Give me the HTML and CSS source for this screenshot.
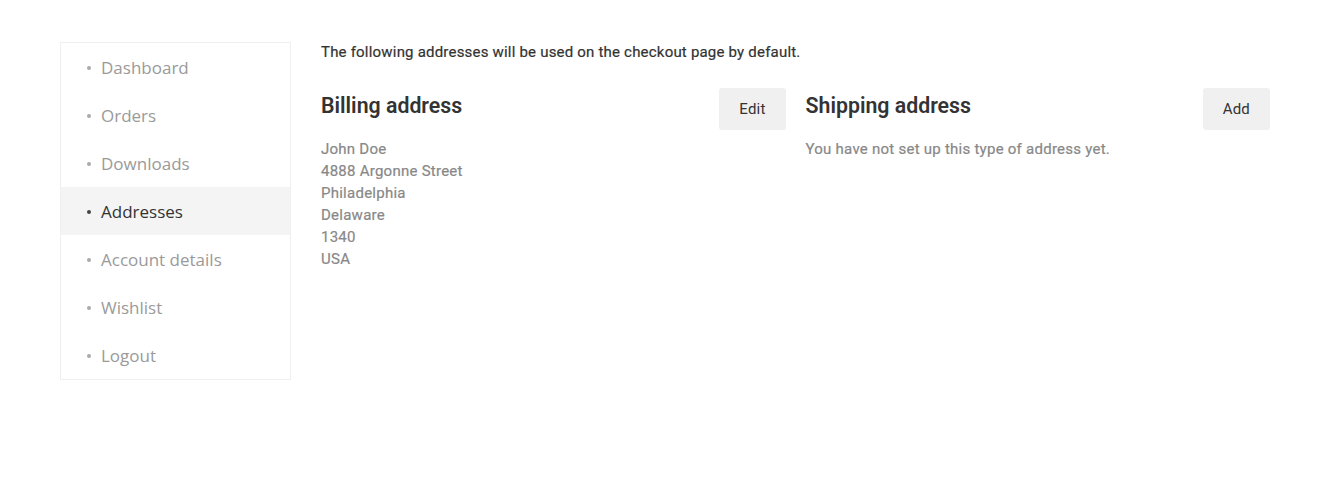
FILE: index.html
```html
<!DOCTYPE html>
<html>
<head>
<meta charset="utf-8">
<link rel="stylesheet" href="styles.css">
</head>
<body>
<div class="page">
  <nav class="sidebar">
    <ul class="nav-list">
      <li class="nav-item"><span class="dot"></span>Dashboard</li>
      <li class="nav-item"><span class="dot"></span>Orders</li>
      <li class="nav-item"><span class="dot"></span>Downloads</li>
      <li class="nav-item active"><span class="dot"></span>Addresses</li>
      <li class="nav-item"><span class="dot"></span>Account details</li>
      <li class="nav-item"><span class="dot"></span>Wishlist</li>
      <li class="nav-item"><span class="dot"></span>Logout</li>
    </ul>
  </nav>
  <main class="content">
    <p class="intro">The following addresses will be used on the checkout page by default.</p>
    <div class="columns">
      <section class="address">
        <div class="address-head">
          <h3 class="address-title">Billing address</h3>
          <button class="btn">Edit</button>
        </div>
        <address class="address-body">John Doe<br>4888 Argonne Street<br>Philadelphia<br>Delaware<br>1340<br>USA</address>
      </section>
      <section class="address">
        <div class="address-head">
          <h3 class="address-title">Shipping address</h3>
          <button class="btn">Add</button>
        </div>
        <p class="address-body">You have not set up this type of address yet.</p>
      </section>
    </div>
  </main>
</div>
</body>
</html>
```
FILE: styles.css
```css
html, body {
  margin: 0;
  padding: 0;
  background: #fff;
}
.page {
  display: flex;
  align-items: flex-start;
  gap: 30px;
  padding: 42px 47px 0 60px;
}
.sidebar {
  width: 229px;
  flex: none;
  border: 1px solid #efefef;
}
.nav-list {
  list-style: none;
  margin: 0;
  padding: 0;
}
.nav-item {
  display: flex;
  align-items: center;
  height: 48px;
  padding-left: 26px;
  font-family: "Open Sans", sans-serif;
  font-size: 17px;
  color: #9a9a9a;
}
.nav-item .dot {
  width: 4px;
  height: 4px;
  border-radius: 50%;
  background: #aaa;
  margin-right: 10px;
  margin-top: 1px;
}
.nav-item.active {
  background: #f4f4f4;
  color: #333;
}
.nav-item.active .dot {
  background: #444;
}
.content {
  flex: 1;
  font-family: "Roboto", sans-serif;
}
.intro {
  margin: -1px 0 0;
  font-size: 15px;
  line-height: 22px;
  font-weight: 400;
  letter-spacing: 0.2px;
  color: #333;
  -webkit-text-stroke: 0.2px #333;
}
.columns {
  display: grid;
  grid-template-columns: 1fr 1fr;
  gap: 20px;
  margin-top: 25px;
}
.address-head {
  display: flex;
  justify-content: space-between;
  align-items: flex-start;
}
.address-title {
  margin: 5px 0 0;
  font-size: 21.3px;
  line-height: 26px;
  font-weight: 600;
  color: #333;
}
.btn {
  height: 42px;
  padding: 0 20px;
  border: none;
  border-radius: 3px;
  background: #f0f0f0;
  font-family: "Roboto", sans-serif;
  font-size: 15px;
  letter-spacing: 0.2px;
  color: #333;
}
.address-body {
  margin: 8px 0 0;
  font-style: normal;
  font-size: 15px;
  line-height: 22px;
  font-weight: 400;
  letter-spacing: 0.25px;
  color: #888;
  -webkit-text-stroke: 0.2px #888;
}
```
